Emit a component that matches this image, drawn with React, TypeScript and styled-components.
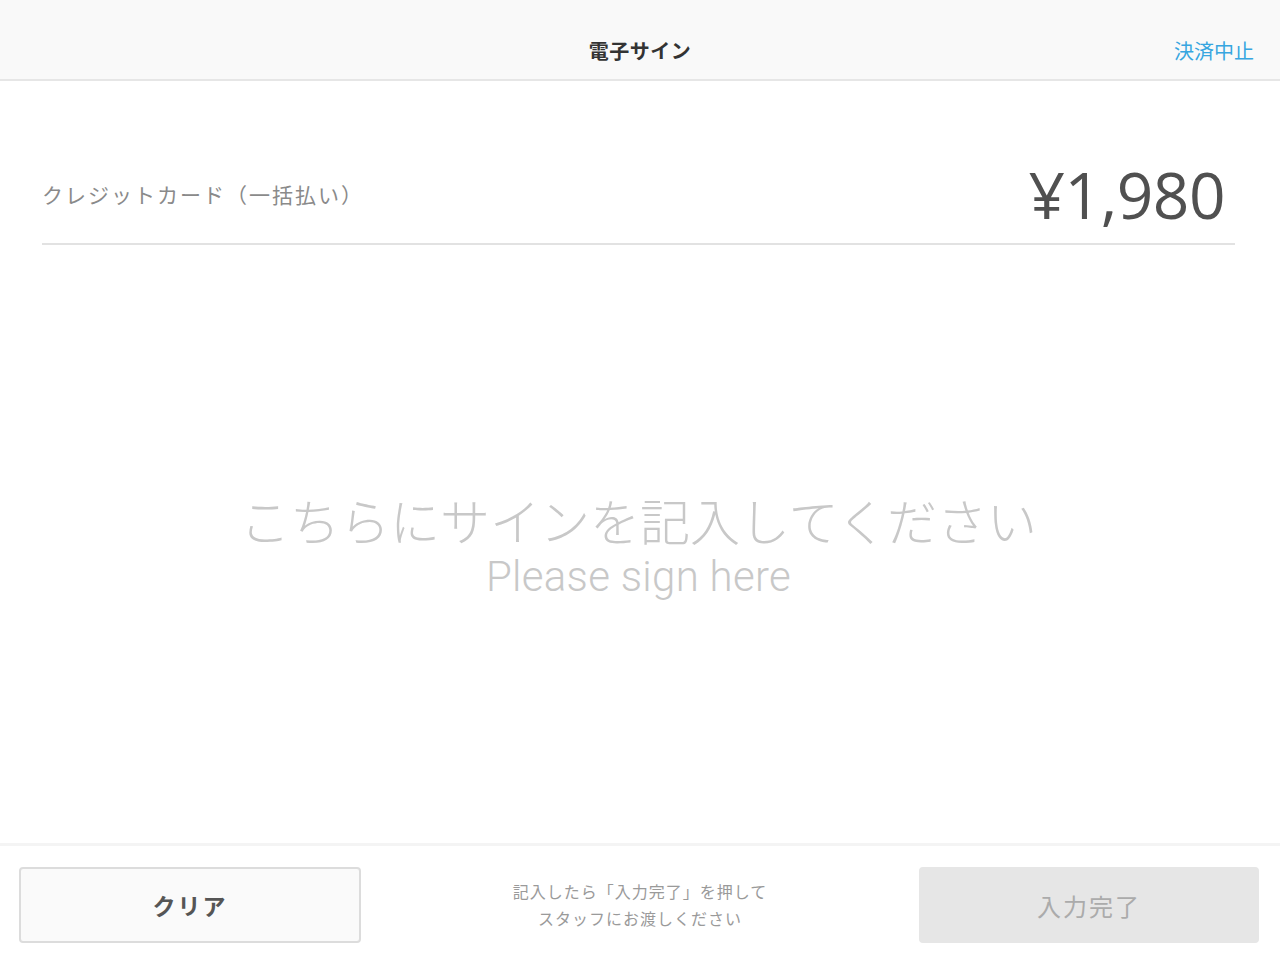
import React from 'react'
import styled, { createGlobalStyle } from 'styled-components'

const GlobalStyle = createGlobalStyle`
  html, body {
    margin: 0;
    padding: 0;
    background: #fff;
  }
  body {
    font-family: "Noto Sans CJK JP", "Noto Sans", sans-serif;
  }
`

const Screen = styled.div`
  width: 1280px;
  height: 964px;
  display: flex;
  flex-direction: column;
  overflow: hidden;
`

const Header = styled.header`
  height: 81px;
  flex-shrink: 0;
  background: #f9f9f9;
  border-bottom: 2px solid #e6e6e6;
  display: grid;
  grid-template-columns: 1fr auto 1fr;
  align-items: center;
  padding: 21px 26px 0 26px;
  box-sizing: border-box;
`

const Title = styled.h1`
  grid-column: 2;
  margin: 0;
  font-size: 20px;
  font-weight: 700;
  color: #333;
  letter-spacing: 0.5px;
`

const CancelLink = styled.button`
  grid-column: 3;
  justify-self: end;
  border: none;
  background: none;
  padding: 0;
  font-family: inherit;
  font-size: 20px;
  color: #37a6e0;
  cursor: pointer;
`

const Body = styled.main`
  flex: 1;
  display: flex;
  flex-direction: column;
  padding: 0 45px 0 42px;
`

const PaymentRow = styled.div`
  height: 164px;
  display: flex;
  align-items: center;
  justify-content: space-between;
  padding: 64px 10px 0 0;
  box-sizing: border-box;
  border-bottom: 2px solid #e2e2e2;
`

const Method = styled.span`
  font-size: 21px;
  color: #8a8a8a;
  letter-spacing: 2px;
`

const Amount = styled.span`
  font-family: "Open Sans", "Noto Sans", sans-serif;
  font-size: 64px;
  color: #505050;
  letter-spacing: -0.5px;
`

const SignArea = styled.div`
  flex: 1;
  display: flex;
  flex-direction: column;
  align-items: center;
  justify-content: center;
  padding-top: 4px;
  color: #c8c8c8;
`

const SignJa = styled.p`
  margin: 0;
  font-size: 50px;
  font-weight: 300;
  line-height: 62px;
`

const SignEn = styled.p`
  margin: 0;
  font-family: "Roboto", "Noto Sans", sans-serif;
  font-size: 42px;
  font-weight: 300;
  line-height: 54px;
  letter-spacing: 0.3px;
`

const Footer = styled.footer`
  height: 121px;
  flex-shrink: 0;
  border-top: 3px solid #f4f4f4;
  box-sizing: border-box;
  display: grid;
  grid-template-columns: 342px 1fr 340px;
  align-items: center;
  padding: 0 21px 0 19px;
`

const Button = styled.button<{ $primary?: boolean }>`
  height: 76px;
  border-radius: 4px;
  font-family: inherit;
  cursor: pointer;
  border: 2px solid ${p => (p.$primary ? '#e6e6e6' : '#dcdcdc')};
  background: ${p => (p.$primary ? '#e6e6e6' : '#fafafa')};
  color: ${p => (p.$primary ? '#ababab' : '#555')};
  font-size: ${p => (p.$primary ? '24px' : '23px')};
  font-weight: ${p => (p.$primary ? 400 : 700)};
  letter-spacing: 2px;
`

const Hint = styled.p`
  margin: 0;
  text-align: center;
  font-size: 16px;
  line-height: 27px;
  color: #9a9a9a;
  letter-spacing: 1px;
`

export default function App() {
  return (
    <>
      <GlobalStyle />
      <Screen>
        <Header>
          <Title>電子サイン</Title>
          <CancelLink>決済中止</CancelLink>
        </Header>
        <Body>
          <PaymentRow>
            <Method>クレジットカード（一括払い）</Method>
            <Amount>¥1,980</Amount>
          </PaymentRow>
          <SignArea>
            <SignJa>こちらにサインを記入してください</SignJa>
            <SignEn>Please sign here</SignEn>
          </SignArea>
        </Body>
        <Footer>
          <Button>クリア</Button>
          <Hint>
            記入したら「入力完了」を押して
            <br />
            スタッフにお渡しください
          </Hint>
          <Button $primary disabled>入力完了</Button>
        </Footer>
      </Screen>
    </>
  )
}
